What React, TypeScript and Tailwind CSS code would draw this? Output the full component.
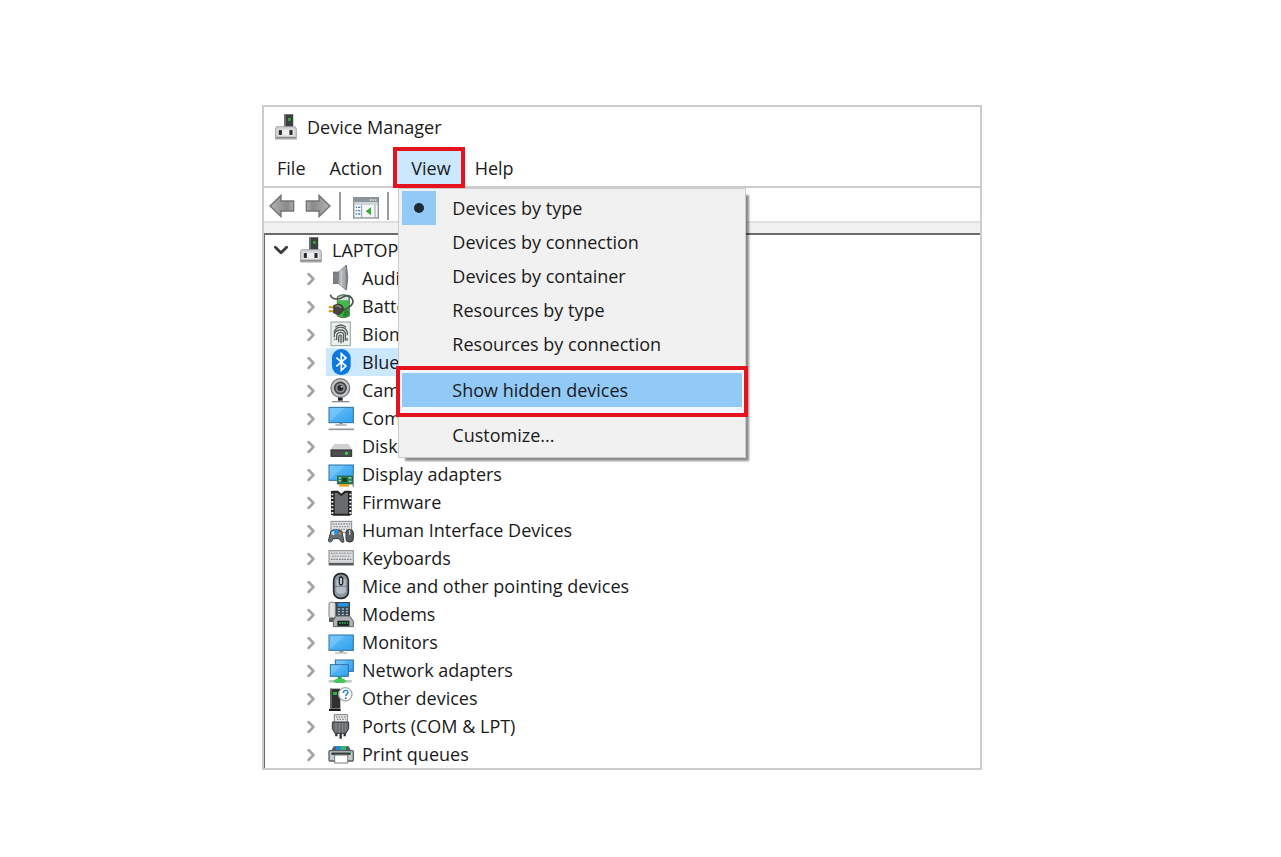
import type { ReactNode } from "react";
import { ChevronDown, ChevronRight } from "lucide-react";

const viewOptions = [
  { label: "Devices by type", checked: true },
  { label: "Devices by connection", checked: false },
  { label: "Devices by container", checked: false },
  { label: "Resources by type", checked: false },
  { label: "Resources by connection", checked: false },
];

function ComputerIcon({ className }: { className: string }) {
  return (
    <svg viewBox="0 0 64 74" className={className} aria-hidden="true">
      <rect x="27" y="0" width="26" height="38" fill="#3c3f41" />
      <rect x="27" y="0" width="5" height="38" fill="#6b6e70" />
      <rect x="38" y="11" width="8" height="8" fill="#2fae3c" />
      <path d="M5 36h53l4 7v29H1V43z" fill="#d3d5d6" stroke="#a3a5a7" strokeWidth="3" />
      <path d="M3 68h58" stroke="#8a8c8e" strokeWidth="5" />
      <rect x="9" y="45" width="46" height="17" fill="#eeeeee" />
      <rect x="11" y="46" width="9" height="14" fill="#26282a" />
      <rect x="42" y="46" width="9" height="14" fill="#26282a" />
    </svg>
  );
}

// every category icon is drawn on a 78x84 canvas
function DeviceIcon({ children }: { children: ReactNode }) {
  return (
    <svg viewBox="0 0 78 84" className="h-7 w-[26px] shrink-0" aria-hidden="true">
      {children}
    </svg>
  );
}

function Screen({ x, y, w, h }: { x: number; y: number; w: number; h: number }) {
  return (
    <>
      <rect x={x} y={y} width={w} height={h} fill="url(#screen)" stroke="#2b6f9e" strokeWidth="3" />
      <path
        d={`M${x + 2} ${y + h - 3}L${x + w * 0.65} ${y + 2}H${x + 2}z`}
        fill="#8ad0ff"
        opacity="0.45"
      />
    </>
  );
}

const categories: { name: string; selected?: boolean; icon: ReactNode }[] = [
  {
    name: "Audio",
    icon: (
      <>
        <rect x="16" y="24" width="15" height="35" fill="#7c8288" stroke="#5c6065" strokeWidth="2" />
        <path d="M31 24L54 4V78L31 59z" fill="#a9aeb3" stroke="#7a7e82" strokeWidth="2" />
        <path d="M40 18V66" stroke="#c8ccd0" strokeWidth="5" />
        <path d="M55 4q9 37 0 74z" fill="#dadcde" stroke="#6d7175" strokeWidth="3" />
      </>
    ),
  },
  {
    name: "Batteries",
    icon: (
      <>
        <path d="M28 14q17-12 36 0v58q-18 10-36 0z" fill="#42b84a" stroke="#5c6b60" strokeWidth="3" />
        <path d="M31 16q15-9 30 0v9H31z" fill="#d5ded8" />
        <path d="M50 54h12v16q-8 5-18 4z" fill="#1f8b2c" />
        <path d="M7 8q3 12 16 13t24-7q16-8 25 6t-10 26-20 5" fill="none" stroke="#4b4f52" strokeWidth="5" />
        <path d="M2 46h16M2 58h16" stroke="#c59a18" strokeWidth="6" />
        <path d="M17 40l13-4q16 2 16 15t-16 17l-13-5z" fill="#4a4440" stroke="#2b2927" strokeWidth="2" />
        <path d="M22 43q12-4 17 5" fill="none" stroke="#96908a" strokeWidth="4" />
      </>
    ),
  },
  {
    name: "Biometric",
    icon: (
      <>
        <rect x="9" y="6" width="58" height="71" fill="#eaf0ee" stroke="#8fa39d" strokeWidth="3" />
        <g fill="none" stroke="#565c5a" strokeWidth="4">
          <path d="M22 22q16-14 32 0" />
          <path d="M18 38q3-16 20-16t20 16v8" />
          <path d="M19 52V42q4-12 19-12t14 14v18" />
          <path d="M26 60V46q2-9 12-9t8 10v20" />
          <path d="M32 67V52q1-8 7-6v24" />
          <path d="M20 60v-4M57 54v8" />
        </g>
      </>
    ),
  },
  {
    name: "Bluetooth",
    selected: true,
    icon: (
      <>
        <rect x="12" y="3" width="56" height="78" rx="27" fill="#0a78dc" />
        <path d="M25 29l29 25-14 13V17l14 13-29 25" fill="none" stroke="#fff" strokeWidth="5" />
      </>
    ),
  },
  {
    name: "Cameras",
    icon: (
      <>
        <rect x="30" y="62" width="14" height="12" fill="#1f2123" />
        <circle cx="37" cy="36" r="28" fill="#c3c5c7" stroke="#77797b" strokeWidth="4" />
        <circle cx="37" cy="36" r="17" fill="#8b8f92" stroke="#3d4043" strokeWidth="5" />
        <circle cx="37" cy="36" r="9" fill="#26292c" />
        <circle cx="41" cy="32" r="3" fill="#c6d4dc" />
        <path d="M12 77h52" stroke="#8b8d8f" strokeWidth="4" />
      </>
    ),
  },
  {
    name: "Computer",
    icon: (
      <>
        <Screen x={3} y={10} w={73} h={46} />
        <path d="M34 57h10v4H34z" fill="#8a9095" />
        <path d="M22 63h34" stroke="#9aa0a4" strokeWidth="4" />
        <path d="M2 76h76" stroke="#8e979d" strokeWidth="5" />
      </>
    ),
  },
  {
    name: "Disk drives",
    icon: (
      <>
        <path d="M19 38h42l10 16H9z" fill="#d0d2d3" stroke="#b4b6b7" strokeWidth="2" />
        <rect x="9" y="54" width="62" height="19" fill="#4c4e50" stroke="#28292a" strokeWidth="3" />
        <rect x="51" y="60" width="9" height="8" fill="#35d348" />
      </>
    ),
  },
  {
    name: "Display adapters",
    icon: (
      <>
        <Screen x={3} y={15} w={73} h={46} />
        <path d="M76 43v38" stroke="#8c9296" strokeWidth="4" />
        <rect x="28" y="48" width="46" height="24" fill="#2b8052" stroke="#1c5638" strokeWidth="2" />
        <rect x="43" y="54" width="14" height="12" fill="#173c2b" />
        <path d="M32 54h7M32 62h7M62 54h8M62 64h8" stroke="#9ed4b1" strokeWidth="4" />
        <path d="M34 72h29v8H34z" fill="#e2a52b" />
      </>
    ),
  },
  {
    name: "Firmware",
    icon: (
      <>
        <path d="M17 11h12l11 10 11-10h12v69H17z" fill="#696b6d" stroke="#202224" strokeWidth="6" />
        <path d="M13 9v72M67 9v72" stroke="#222" strokeWidth="8" />
        <path d="M13 17v60M67 17v60" stroke="#f4f4f4" strokeWidth="6" strokeDasharray="5 6" />
      </>
    ),
  },
  {
    name: "Human Interface Devices",
    icon: (
      <>
        <rect x="9" y="16" width="62" height="34" fill="#e3e5e6" stroke="#85898c" strokeWidth="3" />
        <path d="M14 24h54M17 32h50M14 40h54" stroke="#8b8f92" strokeWidth="4" strokeDasharray="5 3" />
        <path d="M9 45q17-7 32 0l7 32q-7 7-14-9H16Q8 84 1 75z" fill="#697177" stroke="#34393d" strokeWidth="3" />
        <circle cx="16" cy="51" r="6" fill="#c7dfef" />
        <path d="M18 40l13 3-2 14-11-4z" fill="#2294e6" />
        <circle cx="36" cy="52" r="4" fill="#de8034" />
        <rect x="54" y="41" width="22" height="37" rx="10" fill="#575d62" stroke="#2e3235" strokeWidth="3" />
        <path d="M65 42v15" stroke="#c4c8ca" strokeWidth="4" />
      </>
    ),
  },
  {
    name: "Keyboards",
    icon: (
      <>
        <rect x="3" y="20" width="73" height="43" fill="#d9dbdc" stroke="#868a8d" strokeWidth="3" />
        <path d="M3 60h73" stroke="#595d60" strokeWidth="7" />
        <path d="M9 28h61M12 37h56M9 46h61" stroke="#777b7e" strokeWidth="4" strokeDasharray="5 3" />
        <path d="M11 28h61M14 37h56" stroke="#fff" strokeWidth="2" strokeDasharray="3 5" />
      </>
    ),
  },
  {
    name: "Mice and other pointing devices",
    icon: (
      <>
        <rect x="17" y="5" width="44" height="74" rx="20" fill="#8e98a3" stroke="#24282c" strokeWidth="5" />
        <path d="M25 24q14-10 28 0v36q-14 12-28 0z" fill="#b5bec7" />
        <path d="M21 43h36M39 8v34" stroke="#56606a" strokeWidth="2" />
        <rect x="34" y="15" width="10" height="24" rx="5" fill="#c3c9ce" stroke="#24282c" strokeWidth="4" />
      </>
    ),
  },
  {
    name: "Modems",
    icon: (
      <>
        <path d="M20 6h46v42H20z" fill="#3d4248" />
        <rect x="3" y="7" width="19" height="46" rx="5" fill="#dfe1e2" stroke="#7c7f81" strokeWidth="3" />
        <rect x="29" y="9" width="33" height="11" fill="#2495e4" />
        <path d="M29 27h34M29 35h34M29 43h34" stroke="#8dbfe0" strokeWidth="4" strokeDasharray="7 5" />
        <path d="M3 54h20v12H3z" fill="#5d6164" />
        <path d="M25 48h40l11 15v17H16V61z" fill="#aeb2b4" stroke="#606466" strokeWidth="3" />
        <rect x="28" y="62" width="36" height="16" fill="#202422" />
        <path d="M33 69h27" stroke="#34b65a" strokeWidth="5" strokeDasharray="5 3" />
      </>
    ),
  },
  {
    name: "Monitors",
    icon: (
      <>
        <Screen x={3} y={21} w={73} h={46} />
        <path d="M34 68h12v5H34z" fill="#8a9095" />
        <path d="M21 75h37" stroke="#9aa0a4" strokeWidth="3" />
      </>
    ),
  },
  {
    name: "Network adapters",
    icon: (
      <>
        <Screen x={22} y={12} w={54} h={34} />
        <Screen x={7} y={26} w={54} h={35} />
        <path d="M29 62h12v8H29z" fill="#2ba944" />
        <path d="M2 76h69" stroke="#c2c8ca" strokeWidth="8" />
        <path d="M15 76l10-8h22l9 8-9 5H24z" fill="#43c85a" />
      </>
    ),
  },
  {
    name: "Other devices",
    icon: (
      <>
        <path d="M6 14h31v60H6z" fill="#2e3032" />
        <path d="M6 14h6v60H6z" fill="#606365" />
        <rect x="15" y="24" width="12" height="9" fill="#27b83b" />
        <path d="M3 78h35" stroke="#191a1b" strokeWidth="6" />
        <circle cx="52" cy="31" r="20" fill="#fff" stroke="#a7abad" strokeWidth="4" />
        <path d="M46 27q0-8 7-8t7 6q0 4-4 6-3 2-3 6" fill="none" stroke="#1d7fd0" strokeWidth="4" />
        <circle cx="53" cy="43" r="3" fill="#1d7fd0" />
      </>
    ),
  },
  {
    name: "Ports (COM & LPT)",
    icon: (
      <>
        <path d="M19 8h39v24H19z" fill="#e6e7e8" stroke="#7b7e80" strokeWidth="3" />
        <path d="M24 15h31M27 22h26" stroke="#55585a" strokeWidth="3" strokeDasharray="4 4" />
        <path d="M13 30h49v20l-8 14H21l-8-14z" fill="#696c6e" stroke="#353739" strokeWidth="3" />
        <path d="M24 33v27M34 33v29M44 33v29M53 33v24" stroke="#8c8f91" strokeWidth="3" />
        <path d="M25 64v9M38 64v16M50 64v9" stroke="#303234" strokeWidth="7" />
      </>
    ),
  },
  {
    name: "Print queues",
    icon: (
      <>
        <path d="M17 19h45l8 14H9z" fill="#545a5e" />
        <path d="M25 19h29v15H21z" fill="#1588df" />
        <path d="M39 19h15v10H37z" fill="#34bc68" />
        <rect x="3" y="32" width="73" height="31" rx="3" fill="#c4c8ca" stroke="#595e62" strokeWidth="4" />
        <path d="M10 41h58" stroke="#34383b" strokeWidth="7" />
        <path d="M20 45h39v24H20z" fill="#fff" stroke="#777b7e" strokeWidth="3" />
        <path d="M61 37h9" stroke="#39c35a" strokeWidth="3" />
      </>
    ),
  },
];

function ToolbarArrow({ flipped = false }: { flipped?: boolean }) {
  return (
    <svg viewBox="0 0 78 70" className={`h-6 w-[26px] ${flipped ? "-scale-x-100" : ""}`} aria-hidden="true">
      <path d="M3 35L36 3v17h38v30H36v17z" fill="url(#arrow)" stroke="#737373" strokeWidth="4" />
    </svg>
  );
}

function ViewMenu() {
  return (
    <div
      role="menu"
      aria-label="View"
      className="absolute left-[5px] top-full z-10 w-[348px] border border-[#cccccc] bg-[#f1f1f1] pb-[5px] pt-[2px] shadow-[5px_5px_2px_-2px_rgba(0,0,0,0.45)]"
    >
      {viewOptions.map((option) => (
        <button
          key={option.label}
          type="button"
          role="menuitemradio"
          aria-checked={option.checked}
          className="flex h-[34px] w-full items-center gap-4 px-[3px] text-left"
        >
          <span
            className={`flex size-[34px] items-center justify-center ${
              option.checked ? "bg-[#91c9f7]" : ""
            }`}
          >
            {option.checked && <span className="size-[10px] rounded-full bg-[#1f2a33]" />}
          </span>
          {option.label}
        </button>
      ))}
      <div className="-mx-[3px] mt-[5px] border-4 border-[#e5131d] bg-[#f3f6fb] px-[2px] pb-[6px] pt-[3px]">
        <button
          type="button"
          role="menuitem"
          className="flex h-[34px] w-full items-center bg-[#91c9f7] pl-[50px] text-left"
        >
          Show hidden devices
        </button>
      </div>
      <button type="button" role="menuitem" className="flex h-[35px] w-full items-center pl-[53px] text-left">
        Customize...
      </button>
    </div>
  );
}

export default function App() {
  return (
    <main className="min-h-screen bg-white pb-20 pl-[262px] pr-[299px] pt-[105px] font-['Open_Sans','Noto_Sans',sans-serif] text-lg leading-7 text-[#1a1a1a]">
      {/* Shared gradients */}
      <svg className="absolute size-0" aria-hidden="true">
        <defs>
          <linearGradient id="screen" x1="0" y1="0" x2="1" y2="1">
            <stop offset="0" stopColor="#6cc3fb" />
            <stop offset="1" stopColor="#2e9fed" />
          </linearGradient>
          <linearGradient id="arrow" x1="0" y1="0" x2="1" y2="0">
            <stop offset="0" stopColor="#b4b4b4" />
            <stop offset="0.7" stopColor="#8a8a8a" />
            <stop offset="1" stopColor="#a9a9a9" />
          </linearGradient>
        </defs>
      </svg>

      <div className="border-2 border-[#cccccc] bg-white">
        {/* Title bar */}
        <header className="flex h-10 items-center gap-[10px] pl-[11px]">
          <ComputerIcon className="h-[26px] w-[22px]" />
          <h1>Device Manager</h1>
        </header>

        {/* Menu bar */}
        <nav className="flex h-[41px] border-b-2 border-[#cccccc] pl-px">
          <button type="button" className="h-[41px] px-3">
            File
          </button>
          <button type="button" className="h-[41px] px-3">
            Action
          </button>
          <div className="relative -ml-px h-[41px]">
            <button
              type="button"
              aria-haspopup="menu"
              aria-expanded="true"
              className="relative z-20 h-[41px] border-4 border-[#e5131d] bg-[#cce8ff] pl-[14px] pr-[10px]"
            >
              View
            </button>
            <ViewMenu />
          </div>
          <button type="button" className="h-[41px] px-[10px]">
            Help
          </button>
        </nav>

        {/* Toolbar */}
        <div className="flex h-[35px] items-center border-b-2 border-[#e0e0e0] pl-[5px] pt-[2px]">
          <button type="button" aria-label="Back">
            <ToolbarArrow />
          </button>
          <button type="button" aria-label="Forward" className="ml-[10px]">
            <ToolbarArrow flipped />
          </button>
          <span className="ml-2 h-7 w-[2px] bg-[#9b9b9b]" />
          <button type="button" aria-label="Show console tree" className="ml-3 mt-1">
            <svg viewBox="0 0 78 66" className="h-[22px] w-[26px]" aria-hidden="true">
              <rect x="2" y="2" width="74" height="61" fill="#f4f6f7" stroke="#8a9299" strokeWidth="4" />
              <path d="M3 3h72v13H3z" fill="#8a949c" />
              <path d="M50 9h20" stroke="#e6eaec" strokeWidth="5" strokeDasharray="5 3" />
              <path d="M4 21h70" stroke="#a9b1b7" strokeWidth="3" />
              <path d="M26 23v39M66 23v39" stroke="#9aa2a8" strokeWidth="3" />
              <path d="M8 31h4M15 31h7M8 41h4M15 41h7M8 51h4M15 51h7" stroke="#3787bd" strokeWidth="4" />
              <path d="M38 43l16-12v24z" fill="#35ad32" />
            </svg>
          </button>
          <span className="ml-2 h-7 w-[2px] bg-[#9b9b9b]" />
        </div>
        <div className="h-[10px] bg-[#f0f0f0]" />

        {/* Device tree */}
        <div className="border-l border-t-2 border-l-[#6b6b6b] border-t-[#6b6b6b]">
          <div className="flex h-[29px] items-center pl-[7px]">
            <button type="button" aria-label="Collapse" className="text-[#3b3b3b]">
              <ChevronDown className="size-[18px] scale-125" strokeWidth={3} />
            </button>
            <ComputerIcon className="ml-[10px] h-[26px] w-[22px]" />
            <span className="ml-[10px]">LAPTOP</span>
          </div>
          <ul>
            {categories.map((category) => (
              <li key={category.name} className="flex h-7 items-center pl-9">
                <button type="button" aria-label={`Expand ${category.name}`} className="pt-[2px] text-[#a3a3a3]">
                  <ChevronRight className="size-5" strokeWidth={3} />
                </button>
                <span
                  className={`ml-[5px] flex h-7 items-center gap-2 pl-[2px] pr-1 ${
                    category.selected ? "bg-[#cce8ff]" : ""
                  }`}
                >
                  <DeviceIcon>{category.icon}</DeviceIcon>
                  {category.name}
                </span>
              </li>
            ))}
          </ul>
        </div>
      </div>
    </main>
  );
}
